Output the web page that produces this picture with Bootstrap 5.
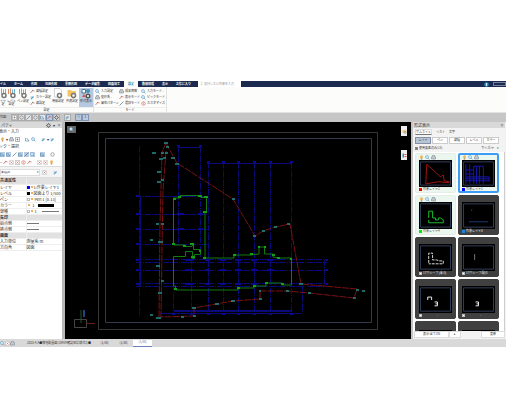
<!DOCTYPE html>
<html lang="ja">
<head>
<meta charset="utf-8">
<meta name="viewport" content="width=device-width, initial-scale=1">
<title>CAD</title>
<link href="https://cdn.jsdelivr.net/npm/bootstrap@5.3.0/dist/css/bootstrap.min.css" rel="stylesheet">
<style>
body{font:4px/1 "Noto Sans CJK JP","Noto Sans",sans-serif;color:#333;background:#fff;overflow:hidden}
.app{margin-top:81px}
button,select,input{font:inherit;color:inherit;line-height:1;padding:0;border:0;background:none;border-radius:0}
svg{display:block;flex:none}
.ic{width:5px;height:5px}
.ic-l{width:10px;height:11px}
.g1{gap:1px}.g2{gap:2px}
.topnav{background:#1d2a50;color:#fff;height:6px;font-size:3px;font-weight:700}
.topnav a{color:#fff;text-decoration:none;height:6px;display:flex;align-items:center;padding:0 4px;white-space:nowrap}
.topnav a:first-child{padding-left:0}
.topnav a.active{background:#fcfcfa;color:#2383b5}
.topnav label{background:#fff;color:#999;height:6px;width:43px;margin-left:3px;padding-left:2px;font-weight:400}
.topnav input{width:36px;height:5px;font-size:3px}
.topnav input::placeholder{color:#888;opacity:1}
.win{width:13px;height:4px;border:1px solid #77809c}
.ribbon{background:#fcfcfa;height:26px;font-size:3px;border-bottom:1px solid #e2e2e2}
.rgroup{border-right:1px solid #e3e3e3;padding-top:1px}
.rgroup footer{height:5px;border-top:1px solid #eee;line-height:4px}
.rbody{height:19px}
.big{width:14px;height:19px;gap:1px;line-height:3px}
.big.w1{width:6px}.big.w2{width:11px}.big.w3{width:12px}
.big.on{background:#b5c8e0}
.small-cmds{display:grid;grid-auto-rows:6px;grid-auto-flow:column;grid-template-rows:repeat(3,6px);margin-left:1px}
.small-cmds button{display:flex;align-items:center;gap:1px;text-align:left;white-space:nowrap}
.three{grid-template-columns:24px 22px 25px}
.tools{background:#c6c6c6;height:9px;font-size:3px;padding-bottom:1px}
.tb{background:#e4e4e4;border:1px solid #aaa;width:7px;height:7px;display:flex;align-items:center;justify-content:center}
.tb.on{background:#b9c9de;border-color:#8095b5}
.side{width:65px;background:#fff;border-right:3px solid #b9b9b9;overflow:hidden;flex:none}
.ptitle{background:#d9d9d9;height:6px;padding:0 1px}
.sect{height:7px;padding-top:1px;margin-left:-1px}
.iconrow{height:8px;gap:1px}
.iconrow .hot{background:#b9cbe0}
.pick{height:12px;background:#f4f4f4;border-top:1px solid #ddd;border-bottom:1px solid #ddd}
.pick label{width:40px;height:7px;border:1px solid #ddd;background:#fff;display:flex;align-items:center}
.pick select{flex:1;height:5px;appearance:none}
.props{width:100%;border-collapse:collapse;table-layout:fixed}
.props td,.props th{height:6px;padding:0;line-height:5px;border-bottom:1px solid #eee;font-weight:400;white-space:nowrap}
.props th[scope=row]{width:26px;border-right:1px solid #eee}
.props .cap{background:#e1e1e1;font-weight:700}
.sw{width:3px;height:3px;border:1px solid #bbb;background:#fff;display:inline-block}
.blue{background:#00f;border-color:#00f}.black{background:#000;border-color:#000}.red{background:#f00;border-color:#f00}.green{background:#0e0;border-color:#0e0}.azure{background:#1684e8;border-color:#1684e8}
.sun{display:inline-block;width:2px;height:2px;border-radius:50%;background:#e99a24;margin:1px}
.thin,.thick{display:inline-block;width:12px;height:1px;background:#777;vertical-align:middle}
.long{width:17px;margin-left:4px}
.thick{width:16px;height:3px;background:#000;margin-left:3px}
.fine{font-size:3px}
.stage{background:#000;min-width:0}
.stage>svg{width:100%;height:217px}
.over{position:absolute;background:#eee;display:flex;align-items:center;justify-content:center}
.o1{left:2px;top:4px;width:9px;height:7px;background:#666}
.o2{right:4px;top:4px;width:6px;height:10px}
.o3{right:4px;top:28px;width:6px;height:10px}
.list{width:95px;background:#f3f3f3;border-left:2px solid #c4c4c4;padding-right:1px;flex:none}
.views{height:8px;font-size:3px;padding-left:2px;gap:4px}
.views button{height:6px}
.views .on{background:#fff;border:1px solid #ddd;border-bottom-color:#777}
.kinds{padding:1px 6px 0 2px;gap:1px;height:8px;font-size:3px}
.kinds button{flex:1;height:7px;background:#fff;border:1px solid #ccc}
.kinds .on{background:#b8c5d9;border-color:#8390a6}
.filter{height:8px;padding:0 6px 0 2px;font-size:3px}
.filter input{width:3px;height:3px;border:1px solid #888;appearance:none;background:#777}
.filter select{width:6px;height:5px;appearance:none}
.thumbs{display:grid;grid-template-columns:1fr 1fr;gap:2px;height:179px;overflow:hidden;background:#fff;padding:1px 5px 0 2px;border-right:1px solid #ccc}
.tile{background:#eaf6ee;border-radius:2px;padding:1px 3px;height:40px;text-align:left;display:block;border:1px solid #e4eee7}
.tile.sel{border:2px solid #3d9cf5;padding:0 2px}
.tile.dark{background:#404040;color:#e8e8e8;border-color:#404040}
.tile .bar{height:5px;gap:1px}
.tile .pic{width:100%;height:27px;background:#000}
.tile .lab{height:5px;gap:1px;font-size:3px;white-space:nowrap}
.pfoot{height:8px;font-size:3px;padding:0 0 0 1px}
.pfoot button{background:#fff;border:1px solid #ddd;height:7px}
.status{background:#d9d9d9;height:8px;font-size:3px;white-space:nowrap}
.status button{width:19px;height:7px}
.status .on{background:#fff;border-bottom:1px solid #6c86bd;color:#5772aa}
</style>
<script src="https://cdn.jsdelivr.net/npm/bootstrap@5.3.0/dist/js/bootstrap.bundle.min.js"></script>
</head>
<body>
<svg width="0" height="0" class="position-absolute" aria-hidden="true">
<symbol id="gear" viewBox="0 0 10 10"><circle cx="5" cy="5" r="3" fill="none" stroke="#666" stroke-width="2"/><path d="M5 0v2M5 8v2M0 5h2M8 5h2M1.5 1.5l1.5 1.5M7 7l1.500 1.500M8.500 1.500L7 3M3 7L1.500 8.500" stroke="#666" stroke-width="1.500"/></symbol>
<symbol id="mag" viewBox="0 0 10 10"><circle cx="4" cy="4" r="3" fill="#dff1ff" stroke="#68a3c6" stroke-width="1.300"/><path d="M6 6l3 3" stroke="#68a3c6" stroke-width="1.600"/></symbol>
<symbol id="bulb" viewBox="0 0 10 10"><circle cx="5" cy="3.500" r="3" fill="#f0b45c"/><path d="M3.500 6.500h3V9h-3z" fill="#a98050"/></symbol>
<symbol id="print" viewBox="0 0 10 10"><path d="M2.500 4V1h5v3M1 4h8v4H1z" fill="#eee" stroke="#657280"/><path d="M3 6.500h4" stroke="#657280"/></symbol>
<symbol id="tealpen" viewBox="0 0 10 10"><path d="M1 8l5-6 2 2-5 5z" fill="#4da5cd"/><path d="M1 4h3" stroke="#777"/></symbol>
<symbol id="redline" viewBox="0 0 10 10"><path d="M1 8L5 3l4 1" fill="none" stroke="#d0716a" stroke-width="1.600"/><circle cx="5" cy="3" r="1.300" fill="#888"/></symbol>
<symbol id="blueln" viewBox="0 0 10 10"><path d="M1 2v6h7M3 2l5 6" fill="none" stroke="#5593b6" stroke-width="1.400"/></symbol>
<symbol id="slash" viewBox="0 0 10 10"><path d="M1 9L9 1" stroke="#557b98" stroke-width="1.500"/></symbol>
<symbol id="circ" viewBox="0 0 10 10"><circle cx="5" cy="5" r="3.500" fill="none" stroke="#777" stroke-width="1.300"/></symbol>
<symbol id="redcirc" viewBox="0 0 10 10"><circle cx="5" cy="5" r="3.500" fill="none" stroke="#d06a63" stroke-width="1.300"/><path d="M5 3v4" stroke="#d06a63"/></symbol>
<symbol id="box" viewBox="0 0 10 10"><path d="M1 1h8v8H1z" fill="#fff" stroke="#888"/><path d="M3 5h4M5 3v4" stroke="#777" stroke-width="1.500"/></symbol>
<symbol id="redbox" viewBox="0 0 10 10"><path d="M1 1h8v8H1z" fill="#fff" stroke="#bbb"/><path d="M3 3l4 4M7 3L3 7" stroke="#d0716a" stroke-width="1.500"/></symbol>
<symbol id="pensgear" viewBox="0 0 20 22"><path d="M3 2v10M7 1v12" stroke="#dd8a68" stroke-width="2"/><path d="M11 3v9M15 2v9" stroke="#6eb0ca" stroke-width="2"/><circle cx="12" cy="15" r="4" fill="#fff" stroke="#777" stroke-width="3"/></symbol>
<symbol id="foldgear" viewBox="0 0 20 22"><path d="M1 4h7l2 2h8v11H1z" fill="#f4c466"/><circle cx="13" cy="15" r="4" fill="#fff" stroke="#777" stroke-width="3"/></symbol>
<symbol id="docgear" viewBox="0 0 20 22"><path d="M3 1h11l3 3v14H3z" fill="#fff" stroke="#aaa"/><circle cx="13" cy="15" r="4" fill="#fff" stroke="#777" stroke-width="3"/></symbol>
<symbol id="formgear" viewBox="0 0 20 22"><path d="M2 3h7v7H2z" fill="#fff" stroke="#4c7390" stroke-width="2"/><circle cx="14" cy="6" r="4" fill="#448fb5"/><path d="M2 18l4-6 4 6z" fill="#ce5d48"/><circle cx="14" cy="16" r="3.500" fill="#fff" stroke="#555" stroke-width="3"/></symbol>
<symbol id="frame" viewBox="0 0 34 27"><path d="M1.500 1.500h31v24h-31z" fill="none" stroke="#33405c"/></symbol>
</svg>

<main class="app">
<nav class="topnav d-flex align-items-center" aria-label="メニュー">
<a href="#">イル</a><a href="#">ホーム</a><a href="#">作図</a><a href="#">汎用作図</a><a href="#">業務作図</a><a href="#">データ編集</a><a href="#">図面加工</a><a href="#" class="active">設定</a><a href="#">数値情報</a><a href="#">表示</a><a href="#">お気に入り</a>
<label class="d-flex align-items-center g1"><span>♀</span><input type="text" placeholder="実行したい作業を入力" aria-label="作業を検索"></label>
<svg class="ic ms-auto" viewBox="0 0 10 10"><circle cx="5" cy="5" r="4.500" fill="#2498cc"/><path d="M5 2v6" stroke="#fff" stroke-width="1.500"/></svg>
<span class="win ms-1"></span>
</nav>

<section class="ribbon d-flex">
<div class="rgroup">
<div class="rbody d-flex">
<button class="big w1 d-flex flex-column align-items-center"><svg class="ic-l"><use href="#pensgear"/></svg><span>イヤ<br>定</span></button>
<button class="big w2 d-flex flex-column align-items-center"><svg class="ic-l"><use href="#pensgear"/></svg><span>レベル<br>設定</span></button>
<button class="big w3 d-flex flex-column align-items-center"><svg class="ic-l"><use href="#pensgear"/></svg>ペン設定</button>
<div class="small-cmds"><button><svg class="ic"><use href="#redline"/></svg>線種設定</button><button><svg class="ic"><use href="#tealpen"/></svg>カラー設定</button><button><svg class="ic"><use href="#redline"/></svg>線設定</button></div>
<button class="big d-flex flex-column align-items-center"><svg class="ic-l"><use href="#docgear"/></svg>用紙設定</button>
<button class="big d-flex flex-column align-items-center"><svg class="ic-l"><use href="#foldgear"/></svg>共通設定</button>
<button class="big on d-flex flex-column align-items-center"><svg class="ic-l"><use href="#formgear"/></svg>形式表示</button>
</div>
<footer class="text-center">設定</footer>
</div>
<div class="rgroup">
<div class="rbody">
<div class="small-cmds three">
<button><svg class="ic"><use href="#mag"/></svg>入力設定</button><button><svg class="ic"><use href="#print"/></svg>座標系 -</button><button><svg class="ic"><use href="#redline"/></svg>属性パターン</button>
<button><svg class="ic"><use href="#print"/></svg>成果情報</button><button><svg class="ic"><use href="#redline"/></svg>表示モード -</button><button><svg class="ic"><use href="#slash"/></svg>選択モード -</button>
<button><svg class="ic"><use href="#mag"/></svg>入力モード -</button><button><svg class="ic"><use href="#mag"/></svg>ピックモード -</button><button><svg class="ic"><use href="#redcirc"/></svg>カスタマイズ</button>
</div></div>
<footer class="text-center">モード</footer>
</div>
</section>

<section class="tools d-flex align-items-center">
<span class="me-1">作図:</span>
<div class="d-flex">
<button class="tb" aria-label="配置"><svg class="ic"><use href="#box"/></svg></button><button class="tb" aria-label="文字"><svg class="ic"><use href="#circ"/></svg></button><button class="tb" aria-label="線"><svg class="ic"><use href="#slash"/></svg></button><button class="tb" aria-label="円"><svg class="ic"><use href="#circ"/></svg></button><button class="tb" aria-label="折線"><svg class="ic"><use href="#blueln"/></svg></button><button class="tb on" aria-label="測点"><svg class="ic"><use href="#redline"/></svg></button><button class="tb" aria-label="設定"><svg class="ic"><use href="#gear"/></svg></button>
</div>
<button class="tb ms-1" aria-label="選択"><svg class="ic"><use href="#tealpen"/></svg></button>
<div class="d-flex ms-1"><button class="tb on" aria-label="前へ">◁</button><button class="tb on" aria-label="次へ">1</button></div>
</section>

<div class="d-flex">
<aside class="side">
<div class="ptitle d-flex align-items-center g2"><span class="me-auto">パティ</span><svg class="ic"><use href="#gear"/></svg><span>▾</span><span>×</span></div>
<div class="sect">表示・入力</div>
<div class="iconrow d-flex align-items-center"><svg class="ic"><use href="#bulb"/></svg><span>▾</span><svg class="ic"><use href="#print"/></svg><svg class="ic hot"><use href="#box"/></svg><svg class="ic ms-1"><use href="#blueln"/></svg><svg class="ic"><use href="#mag"/></svg><svg class="ic ms-1"><use href="#tealpen"/></svg><span>▾</span><svg class="ic"><use href="#tealpen"/></svg></div>
<div class="sect">ック・選択</div>
<div class="iconrow d-flex align-items-center"><svg class="ic hot"><use href="#blueln"/></svg><svg class="ic hot"><use href="#blueln"/></svg><svg class="ic"><use href="#slash"/></svg><svg class="ic hot"><use href="#blueln"/></svg><svg class="ic hot"><use href="#slash"/></svg><svg class="ic hot"><use href="#mag"/></svg><svg class="ic hot ms-1"><use href="#blueln"/></svg><svg class="ic ms-1"><use href="#circ"/></svg></div>
<div class="iconrow d-flex align-items-center"><span>−</span><svg class="ic"><use href="#redline"/></svg><svg class="ic"><use href="#redbox"/></svg><svg class="ic hot"><use href="#redbox"/></svg><svg class="ic"><use href="#redcirc"/></svg><svg class="ic"><use href="#redline"/></svg><svg class="ic ms-1"><use href="#redbox"/></svg><svg class="ic"><use href="#redbox"/></svg><svg class="ic"><use href="#bulb"/></svg></div>
<div class="pick d-flex align-items-center g2"><label class="fine"><select aria-label="選択要素"><option>未選択</option></select><span>▾</span></label><svg class="ic"><use href="#redbox"/></svg><svg class="ic ms-1"><use href="#tealpen"/></svg></div>
<table class="props">
<tr><th scope="row" class="cap">共通属性</th><td class="cap"></td></tr>
<tr><th scope="row">レイヤ</th><td><i class="sw blue"></i><i class="sun"></i>1:作業レイヤ1</td></tr>
<tr><th scope="row">レベル</th><td><i class="sw black"></i><i class="sun"></i>図面より 1/500</td></tr>
<tr><th scope="row">ペン</th><td><i class="sw"></i><i class="sun"></i> Pen 1 [0.13]</td></tr>
<tr><th scope="row">カラー</th><td><i class="sun"></i>&nbsp; 1 <i class="thick"></i></td></tr>
<tr><th scope="row">線種</th><td><i class="sw"></i><i class="sun"></i> 1 <i class="thin long"></i></td></tr>
<tr><th scope="row" class="cap">矢印</th><td class="cap"></td></tr>
<tr><th scope="row">始点側</th><td><i class="thin"></i></td></tr>
<tr><th scope="row">終点側</th><td><i class="thin"></i></td></tr>
<tr><th scope="row" class="cap">画面</th><td class="cap"></td></tr>
<tr><th scope="row">入力単位</th><td>測量系 m</td></tr>
<tr><th scope="row">方向角</th><td>図面</td></tr>
</table>
</aside>

<section class="stage flex-grow-1 position-relative">
<svg viewBox="65 122 346 217" role="img" aria-label="敷地配置図">
<g fill="none">
<path d="M98.500 132.500h279v197h-279z" stroke="#363636"/><path d="M105.500 138.500h266v184h-266z" stroke="#343a4a"/>
<g stroke="#0a0a78"><path d="M139.500 146v171M178.500 147v98M200.500 147v110M208.500 162v151M223.500 162v151M238.500 162v151M254.500 162v151M270.500 162v151M291.500 162v151M173.500 258v55M191.500 258v55M136 196.500h71M136 214.500h71M136 229.500h71M136 244.500h71M136 259.500h191M136 262.500h191M136 270.500h191M136 283.500h191M136 286.500h191M324.500 260v27M302.500 286v27" stroke-dasharray="6 1 1 1"/><path d="M178 147.500h22M207 163.500h84M174 310.500h117M174 311.500h117M160 313.500h142M140.500 196v90"/></g>
<path d="M177 146h3M199 146h3M207 162h3M222 162h3M237 162h3M253 162h3M269 162h3M290 162h3M136 196h3M136 214h3M136 229h3M136 244h3M136 260h3M136 270h3M136 284h3M325 260h3M325 270h3M325 284h3M172 314h3M190 314h3M207 314h3M222 314h3M237 314h3M253 314h3M269 314h3M290 314h3M177 214h7M198 214h5M177 229h7M198 229h5M185 260h8M205 260h5M220 260h6M235 260h6M251 260h6M267 260h6M185 270h8M205 270h5M220 270h6M235 270h6M251 270h6M267 270h6M185 284h8M205 284h5M220 284h6M235 284h6M251 284h6" stroke="#080890" stroke-width="2"/>
<path d="M166 143l-4 9-2 73-1 93M166 151l-3 39-1 60-1 67M166 143l11 20 56 36 22 37 8-5 12-4 15-3 11 60 56 5-3 9-45-5-22-2h-27v8l-27 2-39 7v8l-34 1" stroke="#761313" stroke-dasharray="7 1"/>
<path d="M173.500 245v-47h6.500v-2.500h21v2h5.500v14.500h-1.500v46h29v-3h17l8-1v-7h5.500v7h8.500v3l6 1h12.500v27H282v-2h-16v3h-12v2h-16v2h-62.500v-4h-2v-29.500h12v-5h7v7h2v-4h6v-5h-7v-6l-1.500 3h-7v-1.500h-11" stroke="#117a11"/>
<path d="M173 199h3M178 197h3M198 196h4M204 197h4M203 212h4M172 244h3M183 246h3M190 244h4M191 257h4M199 251h2M203 258h3M233 255h3M250 254h3M258 247h2M264 247h2M272 255h3M277 258h3M290 259h2M281 284h3M265 283h3M253 286h3M237 288h3M174 289h3" stroke="#14a014" stroke-width="2"/>
<path d="M164 143h4M166 147h3M152 153h4M161 153h3M165 153h3M159 159h4M163 158h3M171 158h4M175 164h4M157 172h4M161 180h3M157 182h4M156 224h3M161 224h3M150 240h3M158 242h5M156 266h4M161 281h3M158 293h4M150 315h3M156 318h5M181 317h3M193 316h3M192 308h4M215 304h4M231 301h4M259 299h3M259 291h2M286 291h3M308 293h3M353 298h3M356 290h3M362 291h3M299 284h4M232 199h3M253 236h3M262 231h3M274 227h3M287 224h3" stroke="#248d8d" stroke-width="1.500"/>
<path d="M74.500 319.500h12v8h-12z" stroke="#444"/><path d="M81 323V310" stroke="#21502a"/><path d="M84 317v-7" stroke="#21467c" stroke-width="2"/><path d="M86 323.500h9" stroke="#641f1f"/>
</g></svg>
<button class="over o1" aria-label="表示"><svg class="ic"><use href="#mag"/></svg></button>
<button class="over o2" aria-label="部品"><svg class="ic"><use href="#foldgear"/></svg></button>
<button class="over o3" aria-label="属性"><svg class="ic" viewBox="0 0 10 10"><path d="M1 1h3v8H1z" fill="#338dc4"/><path d="M5 3h4M5 7h4" stroke="#dd5141" stroke-width="2"/></svg></button>
</section>

<aside class="list">
<div class="ptitle d-flex align-items-center justify-content-between"><span>形式表示</span><span>×</span></div>
<div class="views d-flex align-items-center"><button class="on">サムネイル</button><button>リスト</button><button>文字</button></div>
<div class="kinds d-flex"><button class="on">レイヤ</button><button>ペン</button><button>線種</button><button>レベル</button><button>カラー</button></div>
<div class="filter d-flex align-items-center justify-content-between"><label class="d-flex align-items-center g1"><input type="checkbox" checked>使用要素のみ[15]</label><label class="d-flex align-items-center">サイズ: <select><option>中</option></select><span>▾</span></label></div>
<div class="thumbs">
<button class="tile"><span class="bar d-flex"><svg class="ic"><use href="#bulb"/></svg><svg class="ic"><use href="#mag"/></svg><svg class="ic"><use href="#print"/></svg></span><svg class="pic" viewBox="0 0 34 27"><use href="#frame"/><path d="M7 24L8 4l10 9 4 4 3-2 1 6 5 1v1l-11-1-12 2z" fill="none" stroke="#a31515"/></svg><span class="lab d-flex align-items-center"><i class="sw red"></i>作業レイヤ2</span></button>
<button class="tile sel"><span class="bar d-flex"><svg class="ic"><use href="#bulb"/></svg><svg class="ic"><use href="#mag"/></svg><svg class="ic"><use href="#print"/></svg></span><svg class="pic" viewBox="0 0 34 27"><use href="#frame"/><path d="M4 4v20M8 4v20M12 6v18M15 6v18M18 6v18M22 6v18M4 10h8M4 14h8M4 17h24M4 19h24M4 21h24M28 17v5M12 6h10" stroke="#1717b5"/></svg><span class="lab d-flex align-items-center"><i class="sw blue"></i>作業レイヤ1</span></button>
<button class="tile"><span class="bar d-flex"><svg class="ic"><use href="#bulb"/></svg><svg class="ic"><use href="#mag"/></svg><svg class="ic"><use href="#print"/></svg></span><svg class="pic" viewBox="0 0 34 27"><use href="#frame"/><path d="M10 16V9h4v7h3v2h3v-2h2l3 2v3H10v-3" fill="none" stroke="#18bf30"/></svg><span class="lab d-flex align-items-center"><i class="sw green"></i>作業レイヤ4</span></button>
<button class="tile dark"><span class="bar d-flex"></span><svg class="pic" viewBox="0 0 34 27"><use href="#frame"/><path d="M10 7v2M7 20h20" stroke="#173b76"/></svg><span class="lab d-flex align-items-center"><i class="sw azure"></i>作業レイヤ3</span></button>
<button class="tile dark"><span class="bar d-flex"></span><svg class="pic" viewBox="0 0 34 27"><use href="#frame"/><path d="M10 19V9h4v7h4l3 1h4v3H10" fill="none" stroke="#ddd" stroke-dasharray="3 1"/></svg><span class="lab d-flex align-items-center"><i class="sw"></i>17グループ (未:0)</span></button>
<button class="tile dark"><span class="bar d-flex"></span><svg class="pic" viewBox="0 0 34 27"><use href="#frame"/><path d="M13 10v6" stroke="#777"/></svg><span class="lab d-flex align-items-center"><i class="sw"></i>17グループ:配:0</span></button>
<button class="tile dark"><span class="bar d-flex"></span><svg class="pic" viewBox="0 0 34 27"><use href="#frame"/><path d="M9 14v-3h4v3M16 16h3v4h-3M17 18h2" fill="none" stroke="#eee"/></svg><span class="lab d-flex align-items-center"><i class="sw"></i><span class="mx-auto">-</span></span></button>
<button class="tile dark"><span class="bar d-flex"></span><svg class="pic" viewBox="0 0 34 27"><use href="#frame"/><path d="M14 16h3v4h-3M15 18h2" fill="none" stroke="#eee"/></svg><span class="lab d-flex align-items-center"><i class="sw"></i><span class="mx-auto">-</span></span></button>
<button class="tile dark" aria-label="レイヤ"><span class="bar d-flex"></span><svg class="pic" viewBox="0 0 34 27"><use href="#frame"/></svg></button>
<button class="tile dark" aria-label="レイヤ"><span class="bar d-flex"></span><svg class="pic" viewBox="0 0 34 27"><use href="#frame"/></svg></button>
</div>
<div class="pfoot d-flex"><button class="px-2">表示:全てON</button><button class="px-1">▸</button><button class="ms-auto px-2">更新</button></div>
</aside>
</div>

<footer class="status d-flex align-items-center">
<svg class="ic"><use href="#mag"/></svg><svg class="ic"><use href="#redbox"/></svg><svg class="ic"><use href="#print"/></svg>
<span class="ms-2 me-1 ps-1">2023-4-A●敷地配置図[1048M確認申請様式2]●</span>
<button>[1/50]</button><button>[1/50]</button><button class="on">[1/50]</button>
</footer>
</main>
</body>
</html>
